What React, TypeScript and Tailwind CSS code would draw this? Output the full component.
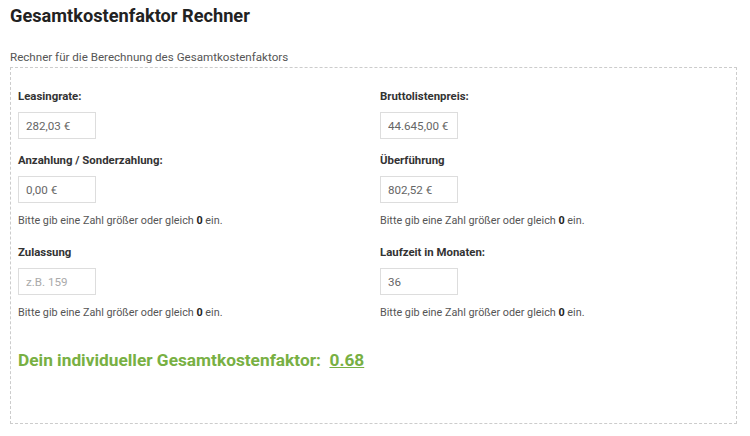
import React from 'react';

type Field = {
  label: string;
  value?: string;
  placeholder?: string;
  hint?: boolean;
};

const left: Field[] = [
  { label: 'Leasingrate:', value: '282,03 €' },
  { label: 'Anzahlung / Sonderzahlung:', value: '0,00 €', hint: true },
  { label: 'Zulassung', placeholder: 'z.B. 159', hint: true },
];

const right: Field[] = [
  { label: 'Bruttolistenpreis:', value: '44.645,00 €' },
  { label: 'Überführung', value: '802,52 €', hint: true },
  { label: 'Laufzeit in Monaten:', value: '36', hint: true },
];

const FieldBlock = ({ f }: { f: Field }) => (
  <div className={f.hint ? 'mb-[15px]' : 'mb-[13px]'}>
    <label className="block text-[11.4px] leading-[16px] font-bold text-[#333]">{f.label}</label>
    <input
      readOnly
      defaultValue={f.value}
      placeholder={f.placeholder}
      className="mt-[8px] block w-[78px] h-[27px] border border-[#ddd] bg-white px-[7px] text-[11.6px] text-[#666] placeholder:text-[#aaa] outline-none"
    />
    {f.hint && (
      <p className="mt-[10px] text-[10.8px] leading-[16px] text-[#555]">
        Bitte gib eine Zahl größer oder gleich <b className="text-[#222]">0</b> ein.
      </p>
    )}
  </div>
);

const App = () => {
  return (
    <div className="w-[750px] h-[436px] bg-white px-[10px] pt-[5px] font-['Roboto',sans-serif]">
      <h1 className="text-[18.2px] leading-[22px] font-bold text-[#222]">Gesamtkostenfaktor Rechner</h1>
      <p className="mt-[22px] text-[11.6px] leading-[16px] text-[#555]">
        Rechner für die Berechnung des Gesamtkostenfaktors
      </p>
      <div className="mt-[2px] w-[727px] h-[357px] border border-dashed border-[#ccc] px-[7px] pt-[20px]">
        <div className="grid grid-cols-[362px_1fr]">
          <div>
            {left.map((f) => (
              <FieldBlock key={f.label} f={f} />
            ))}
          </div>
          <div>
            {right.map((f) => (
              <FieldBlock key={f.label} f={f} />
            ))}
          </div>
        </div>
        <p className="mt-[13px] text-[17.3px] leading-[22px] font-bold text-[#78b043]">
          Dein individueller Gesamtkostenfaktor:&nbsp;&nbsp;<span className="underline">0.68</span>
        </p>
      </div>
    </div>
  );
};

export default App;
